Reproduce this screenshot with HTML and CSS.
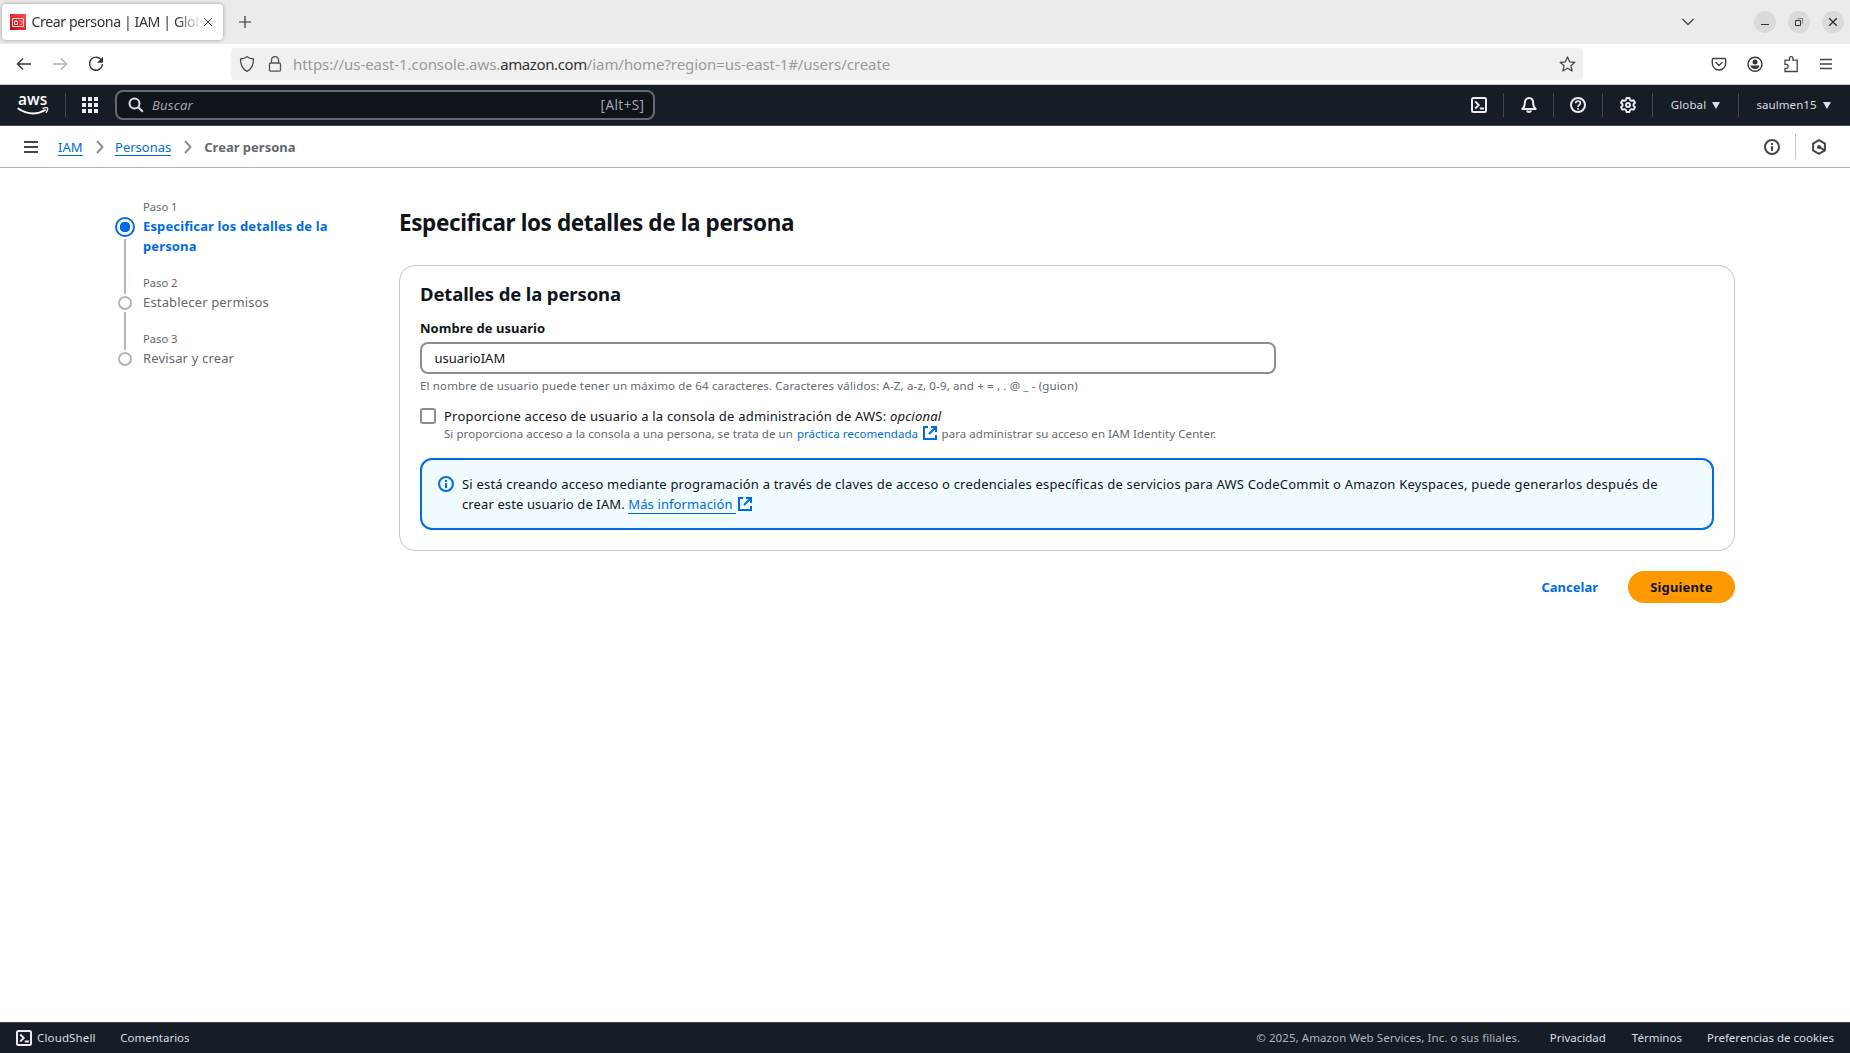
FILE: index.html
```html
<!DOCTYPE html>
<html lang="es">
<head>
<meta charset="utf-8">
<title>Crear persona | IAM | Global</title>
<link rel="stylesheet" href="styles.css">
</head>
<body>
<div class="tabs">
  <div class="tab">
    <svg class="favicon" width="16" height="16" viewBox="0 0 16 16"><defs><linearGradient id="red" x1="0" y1="1" x2="1" y2="0"><stop offset="0" stop-color="#bd0816"/><stop offset="1" stop-color="#ff5252"/></linearGradient></defs><path fill="url(#red)" d="M0 0h16v16H0z"/><g fill="none" stroke="#fff" stroke-width=".8"><path d="M2.500 4.500h11v8h-11zM4.500 7.500h3v3h-3z"/><path d="M6 7.500V6"/><path d="M9.500 7h2.500v3.500H9.500" opacity=".5"/></g></svg>
    <span class="tab-title">Crear persona | IAM | Glob</span>
    <svg class="tab-close" width="10" height="10" viewBox="0 0 10 10" fill="none" stroke="#3c3c3c"><path d="M1 1l8 8M9 1L1 9"/></svg>
  </div>
  <svg class="new-tab" width="12" height="12" viewBox="0 0 12 12" fill="none" stroke="#333" stroke-width="1.200"><path d="M6 0v12M0 6h12"/></svg>
  <svg class="tab-list" width="14" height="8" viewBox="0 0 14 8" fill="none" stroke="#444" stroke-width="1.300"><path d="M1.500 1L7 6.500 12.500 1"/></svg>
  <div class="window-buttons">
    <span class="round"><svg width="10" height="10" viewBox="0 0 10 10"><path stroke="#333" d="M1 7.500h8"/></svg></span>
    <span class="round"><svg width="10" height="10" viewBox="0 0 10 10" fill="none" stroke="#333"><path d="M1.500 3.500h5v5h-5z"/><path d="M3.500 1.500h5v5" opacity=".5"/></svg></span>
    <span class="round"><svg width="10" height="10" viewBox="0 0 10 10" fill="none" stroke="#333" stroke-width="1.400"><path d="M1.200 1.200l7.600 7.600M8.800 1.200L1.200 8.800"/></svg></span>
  </div>
</div>
<div class="toolbar">
  <div class="nav-buttons">
    <svg width="16" height="16" viewBox="0 0 16 16" fill="none" stroke="#333" stroke-width="1.400"><path d="M15 8H1.500M7 2.500L1.500 8 7 13.500"/></svg>
    <svg width="16" height="16" viewBox="0 0 16 16" fill="none" stroke="#b0b0b0" stroke-width="1.300"><path d="M1 8h13.500M9 2.500L14.500 8 9 13.500"/></svg>
    <svg width="16" height="16" viewBox="0 0 16 16" fill="none" stroke="#333" stroke-width="1.400"><path d="M13.500 4.200A6.500 6.500 0 1 0 14.500 8"/><path fill="#333" stroke="none" d="M15 .8v6H9z"/></svg>
  </div>
  <div class="url-bar">
    <svg width="16" height="16" viewBox="0 0 16 16" fill="none" stroke="#484848" stroke-width="1.300"><path d="M8 .8c2 1.500 4.200 2 6.500 2.200 0 5.500-1.500 10-6.500 12.300C3 13 1.500 8.500 1.500 3 3.800 2.800 6 2.300 8 .8z"/></svg>
    <svg width="14" height="16" viewBox="0 0 14 16" fill="none" stroke="#555" stroke-width="1.300"><rect x="1.500" y="7" width="11" height="8.200" rx="1.200"/><path d="M3.500 7V4a3.500 3.500 0 0 1 7 0v3"/></svg>
    <span class="url"><span>https://us-east-1.console.aws.</span><b>amazon.com</b><span>/iam/home?region=us-east-1#/users/create</span></span>
    <svg class="star" width="17" height="16" viewBox="0 0 17 16" fill="none" stroke="#444" stroke-width="1.200" stroke-linejoin="round"><path d="M8.500 1l2.100 4.800 5.300.5-4 3.500 1.200 5.200-4.600-2.700L3.900 15l1.200-5.200-4-3.500 5.300-.5z"/></svg>
  </div>
  <div class="browser-tools">
    <svg width="16" height="16" viewBox="0 0 16 16" fill="none" stroke="#444" stroke-width="1.400"><path d="M2.500 2.500h11c.7 0 1.200.5 1.200 1.200v3.600a6.700 6.700 0 0 1-13.400 0V3.700c0-.7.500-1.200 1.200-1.200z"/><path d="M4.500 6L8 9.500 11.500 6"/></svg>
    <svg width="16" height="16" viewBox="0 0 16 16" fill="none" stroke="#333" stroke-width="1.400"><circle cx="8" cy="8.300" r="7"/><circle cx="8" cy="6" r="2.500" fill="#333" stroke="none"/><path fill="#333" stroke="none" d="M3.500 9.500h9c-.3 2.200-2 3.500-4.500 3.500s-4.200-1.300-4.500-3.500z"/></svg>
    <svg width="16" height="18" viewBox="0 0 16 18" fill="none" stroke="#444" stroke-width="1.300"><path d="M1 7.500V5.200h4.500V3.300a1.700 1.700 0 0 1 3.400 0v1.900h4.300v11.300H1v-3.200h1.200a2 2 0 0 0 0-4H1z"/></svg>
    <svg width="12" height="12" viewBox="0 0 12 12" fill="none" stroke="#444" stroke-width="1.300"><path d="M0 1.500h12M0 6h12M0 10.500h12"/></svg>
  </div>
</div>
<header class="console">
  <div class="logo"><span>aws</span><svg width="32" height="8" viewBox="0 0 32 8" fill="none" stroke="#fff"><path stroke-width="1.900" d="M.7 1.200c9 6.200 19 6.800 28 1.500"/><path stroke-width="1.300" d="M25.500 1.300c2-.6 4.300-.8 5-.2.500.7-.4 3-1.600 4.700"/></svg></div>
  <svg class="apps" width="16" height="16" viewBox="0 0 16 16" fill="#ebebf0"><path d="M0 0h4v4H0zM6 0h4v4H6zM12 0h4v4h-4zM0 6h4v4H0zM6 6h4v4H6zM12 6h4v4h-4zM0 12h4v4H0zM6 12h4v4H6zM12 12h4v4h-4z"/></svg>
  <div class="search">
    <svg width="16" height="16" viewBox="0 0 16 16" fill="none" stroke="#dedee3" stroke-width="2"><circle cx="6.500" cy="6.500" r="5"/><path d="M10 10l4.800 4.800"/></svg>
    <i>Buscar</i><span class="shortcut">[Alt+S]</span>
  </div>
  <div class="tools">
    <span class="cell"><svg width="16" height="16" viewBox="0 0 16 16" fill="none" stroke="#ebebf0" stroke-width="2"><rect x="1" y="1" width="14" height="14" rx="1.500"/><path stroke-width="1.800" d="M4.200 4.500L7.800 8l-3.600 3.500M8.800 11.500H13"/></svg></span>
    <span class="cell"><svg width="16" height="16" viewBox="0 0 16 16" fill="none" stroke="#ebebf0" stroke-width="2" stroke-linejoin="round"><path d="M1.300 12h13.400c-1.800-1.400-2.500-3-2.500-5.800C12.200 3 10.500 1 8 1S3.800 3 3.800 6.200C3.800 9 3.100 10.600 1.300 12z"/><path d="M6 13.500c.3 2 3.700 2 4 0"/></svg></span>
    <span class="cell"><svg width="16" height="16" viewBox="0 0 16 16" fill="none" stroke="#ebebf0" stroke-width="2"><circle cx="8" cy="8" r="7"/><path stroke-width="1.700" d="M5.700 6.300c0-3 4.700-3 4.700-.2C10.400 8 8 7.800 8 10M8 11v1.700"/></svg></span>
    <span class="cell"><svg width="16" height="16" viewBox="0 0 16 16" fill="none" stroke="#ebebf0" stroke-width="1.900" stroke-linejoin="round"><path d="M6.500 1h3l.5 2 1.500.8 2-.6 1.500 2.600L13.500 7.200v1.600l1.500 1.400-1.500 2.600-2-.6-1.500.8-.5 2h-3L6 13l-1.500-.8-2 .6L1 10.200l1.500-1.400V7.200L1 5.800l1.500-2.600 2 .6L6 3z"/><circle cx="8" cy="8" r="2"/></svg></span>
    <span class="cell region"><span>Global</span><i class="caret"></i></span>
    <span class="cell user"><span>saulmen15</span><i class="caret"></i></span>
  </div>
</header>
<nav class="breadcrumbs">
  <svg class="menu" width="14" height="12" viewBox="0 0 14 12" stroke="#424650" stroke-width="2"><path d="M0 1h14M0 6h14M0 11h14"/></svg>
  <a class="c-iam">IAM</a>
  <svg class="sep" width="8" height="14" viewBox="0 0 8 14" fill="none" stroke="#8c8c94" stroke-width="2"><path d="M1 1l5.500 6L1 13"/></svg>
  <a class="c-personas">Personas</a>
  <svg class="sep" width="8" height="14" viewBox="0 0 8 14" fill="none" stroke="#8c8c94" stroke-width="2"><path d="M1 1l5.500 6L1 13"/></svg>
  <strong>Crear persona</strong>
  <div class="panel-icons">
    <svg width="16" height="16" viewBox="0 0 16 16" fill="none" stroke="#424650" stroke-width="2"><circle cx="8" cy="8" r="7"/><path d="M8 4v2M8 7.200V12"/></svg>
    <span></span>
    <svg width="16" height="16" viewBox="0 0 16 16" fill="none" stroke="#424650" stroke-width="2"><path d="M8 1.200l5.900 3.400v6.800L8 14.800l-5.900-3.400V4.600z"/><circle cx="8" cy="8" r="2" fill="#424650" stroke="none"/><path d="M8 8l5.500 3.200"/></svg>
  </div>
</nav>
<main>
  <ol class="steps">
    <li class="active"><span class="rail"><i></i></span><div><small>Paso 1</small><p>Especificar los detalles de la persona</p></div></li>
    <li><span class="rail"><i></i></span><div><small>Paso 2</small><p>Establecer permisos</p></div></li>
    <li><span class="rail"><i></i></span><div><small>Paso 3</small><p>Revisar y crear</p></div></li>
  </ol>
  <section class="content">
    <h1>Especificar los detalles de la persona</h1>
    <div class="card">
      <h2>Detalles de la persona</h2>
      <label class="name-label">Nombre de usuario</label>
      <div class="input">usuarioIAM</div>
      <p class="hint">El nombre de usuario puede tener un máximo de 64 caracteres. Caracteres válidos: A-Z, a-z, 0-9, and + = , . @ _ - (guion)</p>
      <div class="check">
        <span class="box"></span>
        <div>
          <p class="check-label">Proporcione acceso de usuario a la consola de administración de AWS: <em>opcional</em></p>
          <p class="check-desc">Si proporciona acceso a la consola a una persona, se trata de un <a>práctica recomendada</a><svg class="ext" width="14" height="14" viewBox="0 0 14 14" fill="none" stroke="#006ce0" stroke-width="2"><path d="M5 1H1v12h12V9M8 1h5v5M13 1L6 8"/></svg>para administrar su acceso en IAM Identity Center.</p>
        </div>
      </div>
      <div class="alert">
        <svg width="16" height="16" viewBox="0 0 16 16" fill="none" stroke="#006ce0" stroke-width="2"><circle cx="8" cy="8" r="7"/><path d="M8 4v2M8 7.200V12"/></svg>
        <p>Si está creando acceso mediante programación a través de claves de acceso o credenciales específicas de servicios para AWS CodeCommit o Amazon Keyspaces, puede generarlos después de<br><span class="tight">crear este usuario de IAM. <a>Más información </a></span><svg class="ext" width="14" height="14" viewBox="0 0 14 14" fill="none" stroke="#006ce0" stroke-width="2"><path d="M5 1H1v12h12V9M8 1h5v5M13 1L6 8"/></svg></p>
      </div>
    </div>
    <div class="actions"><a class="cancel">Cancelar</a><button>Siguiente</button></div>
  </section>
</main>
<footer>
  <svg width="16" height="16" viewBox="0 0 16 16" fill="none" stroke="#ebebf0" stroke-width="2"><rect x="1" y="1" width="14" height="14" rx="1.500"/><path stroke-width="1.800" d="M4.200 4.500L7.800 8l-3.600 3.500M8.800 11.500H13"/></svg>
  <span class="f-shell">CloudShell</span><span class="f-feedback">Comentarios</span>
  <span class="f-copy">© 2025, Amazon Web Services, Inc. o sus filiales.</span>
  <span class="f-privacy">Privacidad</span><span class="f-terms">Términos</span><span class="f-cookies">Preferencias de cookies</span>
</footer>
</body>
</html>
```
FILE: styles.css
```css
* { box-sizing: border-box; margin: 0; padding: 0; }
body { width: 1850px; height: 1053px; display: flex; flex-direction: column; overflow: hidden; background: #fff; color: #0f141a; font-family: "Noto Sans", "Open Sans", sans-serif; font-size: 13px; line-height: 20px; white-space: nowrap; }
svg { flex: none; display: block; }

.tabs { height: 44px; flex: none; background: #ebebeb; display: flex; align-items: center; padding: 0 6px 0 2px; }
.tab { width: 221px; height: 36px; background: #fff; border-radius: 4px; box-shadow: 0 0 4px rgba(0,0,0,.35); display: flex; align-items: center; padding-left: 8px; }
.tab-title { width: 168px; margin-left: 5.500px; font-size: 14.200px; letter-spacing: -.43px; color: #333; -webkit-mask-image: linear-gradient(90deg, #000 145px, transparent 169px); mask-image: linear-gradient(90deg, #000 145px, transparent 169px); }
.tab-close { margin-left: 3px; }
.new-tab { margin-left: 16px; }
.tab-list { margin-left: auto; margin-right: 59px; }
.window-buttons { display: flex; gap: 12px; }
.round { width: 22px; height: 22px; border-radius: 50%; background: #dadada; display: flex; align-items: center; justify-content: center; }

.toolbar { height: 41px; flex: none; border-bottom: 1px solid #cbcbcb; display: flex; align-items: center; padding: 0 18px 0 16px; }
.nav-buttons { display: flex; gap: 20px; width: 215px; }
.url-bar { width: 1352px; height: 32px; background: #f0f0f0; border-radius: 4px; display: flex; align-items: center; padding: 0 7px 0 8px; }
.url-bar svg + svg { margin-left: 13px; }
.url-bar .url { margin-left: 11px; font-size: 15px; letter-spacing: -.075px; color: #9a9a9a; }
.url b { font-weight: 400; color: #333; letter-spacing: -.4px; }
.url-bar .star { margin-left: auto; }
.browser-tools { display: flex; align-items: center; gap: 20.500px; margin-left: auto; }

.console { height: 41px; flex: none; background: #161d26; border-bottom: 1px solid #424650; color: #dedee3; display: flex; align-items: center; padding-left: 17px; }
.logo { width: 49px; height: 24px; border-right: 1px solid #424650; }
.logo span { display: block; color: #fff; font: 600 15.500px/13px "Open Sans", sans-serif; letter-spacing: .1px; height: 14px; padding-left: 1px; }
.apps { margin-left: 16px; }
.search { margin-left: 17px; width: 540px; height: 30px; border: 2px solid #656871; border-radius: 8px; background: #0f141a; display: flex; align-items: center; padding: 0 8.500px 0 10.500px; color: #a4a4ad; }
.search i { margin-left: 8.500px; letter-spacing: .27px; }
.shortcut { margin-left: auto; font-size: 13.500px; letter-spacing: .42px; }
.tools { margin-left: auto; display: flex; height: 24px; }
.cell { width: 50px; border-right: 1px solid #424650; display: flex; align-items: center; justify-content: center; font-size: 11.500px; letter-spacing: .12px; }
.cell:nth-child(3) { width: 49px; }
.region { width: 86px; }
.user { width: 111px; border: 0; justify-content: flex-start; padding-left: 17.500px; letter-spacing: .06px; }
.caret { border: 4.500px solid transparent; border-top: 7px solid #dedee3; border-bottom: 0; margin-left: 6px; }

.breadcrumbs { height: 42px; flex: none; border-bottom: 1px solid #b4b4bb; display: flex; align-items: center; padding-left: 24px; }
.breadcrumbs a { color: #006ce0; border-bottom: 1px solid #006ce0; line-height: 16px; padding-top: 1px; }
.c-iam { margin-left: 20px; }
.sep { margin: 0 11.500px 0 13px; }
.breadcrumbs strong { color: #656871; margin-left: .5px; }
.panel-icons { margin-left: auto; margin-right: 23px; display: flex; align-items: center; gap: 15px; }
.panel-icons span { width: 1px; height: 25px; background: #c6c6cd; }

main { flex: 1; display: flex; padding: 31px 115px 0 115px; align-items: flex-start; }
.steps { list-style: none; width: 284px; display: flex; flex-direction: column; }
.steps li { display: flex; color: #656871; }
.steps li > div { padding-bottom: 19px; width: 200px; white-space: normal; }
.steps small { display: block; font-size: 11.200px; line-height: 16px; margin-bottom: 1px; letter-spacing: 0; }
.steps p { letter-spacing: .16px; }
.rail { width: 20px; margin-right: 8px; display: flex; flex-direction: column; align-items: center; padding-top: 21px; }
.rail::after { content: ""; flex: 1; width: 2px; background: #b4b4bb; margin: 2px 0 -19px; }
.rail i { width: 14px; height: 14px; border: 2px solid #b4b4bb; border-radius: 50%; }
.active .rail { padding-top: 18px; }
.active .rail i { width: 20px; height: 20px; border-color: #006ce0; background: radial-gradient(circle, #006ce0 5px, transparent 5.500px); }
.steps li:last-child .rail::after { display: none; }
.steps .active p { color: #006ce0; font-weight: 700; letter-spacing: .13px; }

.content { flex: 1; }
h1 { font-size: 22.500px; line-height: 30px; letter-spacing: -.39px; margin-top: 9px; }
.card { margin-top: 27px; height: 286px; border: 1px solid #c6c6cd; border-radius: 16px; padding: 16px 20px; }
h2 { font-size: 18.500px; line-height: 24px; letter-spacing: -.13px; }
.name-label { display: block; margin-top: 12px; font-weight: 700; letter-spacing: .03px; }
.input { margin-top: 4px; width: 856px; height: 32px; border: 2px solid #8c8c94; border-radius: 8px; padding: 0 12.500px; line-height: 28px; }
.hint { margin-top: 4px; font-size: 11.500px; line-height: 16px; letter-spacing: .148px; color: #656871; }
.check { display: flex; margin-top: 12px; }
.box { width: 16px; height: 16px; border: 2px solid #8c8c94; border-radius: 3px; margin: 2px 8px 0 0; }
.check-label { letter-spacing: .21px; }
.check-desc { font-size: 11.500px; line-height: 16px; letter-spacing: .06px; color: #656871; display: flex; align-items: center; }
.check-desc a { margin-left: 4px; letter-spacing: .03px; }
.check-desc .ext { margin: -2px 4.500px 0 5px; }
.check-desc a, .alert a, .cancel { color: #006ce0; }
.alert { margin-top: 16px; height: 72px; border: 2px solid #006ce0; border-radius: 12px; background: #f0fbff; display: flex; padding: 14px 16px; gap: 8px; }
.alert > svg { margin-top: 2px; }
.alert p { letter-spacing: .195px; }
.alert .tight { letter-spacing: .11px; }
.alert a { display: inline-block; line-height: 17px; border-bottom: 1px solid #006ce0; white-space: pre; }
.alert .ext { display: inline-block; vertical-align: -2px; margin-left: 1.500px; }
.actions { display: flex; justify-content: flex-end; align-items: center; margin-top: 20px; font-weight: 700; }
.cancel { margin-right: 30px; }
button { width: 107px; height: 32px; border: 0; border-radius: 16px; background: #ff9900; color: #0f141a; font: inherit; letter-spacing: .14px; }

footer { height: 31px; flex: none; background: #161d26; border-top: 1px solid #424650; color: #dedee3; display: flex; align-items: center; padding: 0 16px; font-size: 11.500px; }
.f-shell { margin-left: 5px; letter-spacing: .15px; }
.f-feedback { margin-left: 24.500px; }
.f-copy { margin-left: auto; color: #b4b4bb; letter-spacing: .085px; }
.f-privacy { margin-left: 29.500px; }
.f-terms { margin-left: 26px; }
.f-cookies { margin-left: 25px; }
```
